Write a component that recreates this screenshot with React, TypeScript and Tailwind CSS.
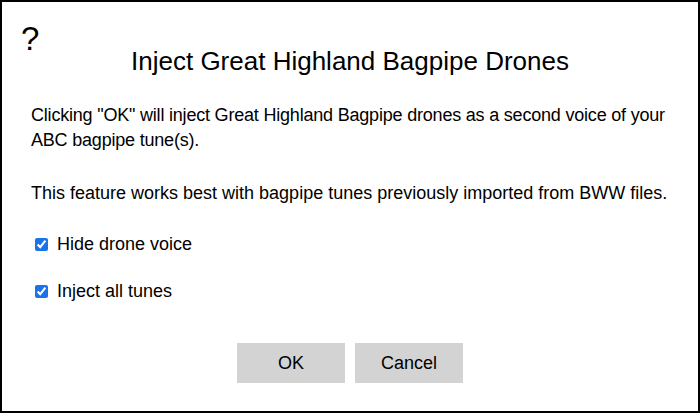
export default function App() {
  return (
    <div
      className="relative w-[700px] h-[413px] border-2 border-black bg-white text-black"
      style={{ fontFamily: '"Liberation Sans", Arial, sans-serif' }}
    >
      <div className="absolute left-[19px] top-[20px] text-[33px] leading-none">?</div>
      <div className="pt-[44px] text-center text-[26px] leading-[30px]">
        Inject Great Highland Bagpipe Drones
      </div>
      <div className="pl-[29px] pr-[10px] pt-[27px] text-[18px] leading-[25px]">
        <p className="tracking-[-0.2px] whitespace-nowrap">
          Clicking "OK" will inject Great Highland Bagpipe drones as a second voice of your
          <br />
          ABC bagpipe tune(s).
        </p>
        <p className="mt-[28px]">
          This feature works best with bagpipe tunes previously imported from BWW files.
        </p>
        <label className="mt-[26px] flex items-center gap-[9px] pl-[4px]">
          <input type="checkbox" defaultChecked className="w-[13px] h-[13px] m-0 accent-[#1a73e8]" />
          <span>Hide drone voice</span>
        </label>
        <label className="mt-[22px] flex items-center gap-[9px] pl-[4px]">
          <input type="checkbox" defaultChecked className="w-[13px] h-[13px] m-0 accent-[#1a73e8]" />
          <span>Inject all tunes</span>
        </label>
      </div>
      <div className="mt-[39px] flex justify-center gap-[10px]">
        <button className="w-[108px] h-[40px] bg-[#d3d3d3] text-[18px]">OK</button>
        <button className="w-[108px] h-[40px] bg-[#d3d3d3] text-[18px]">Cancel</button>
      </div>
    </div>
  );
}
